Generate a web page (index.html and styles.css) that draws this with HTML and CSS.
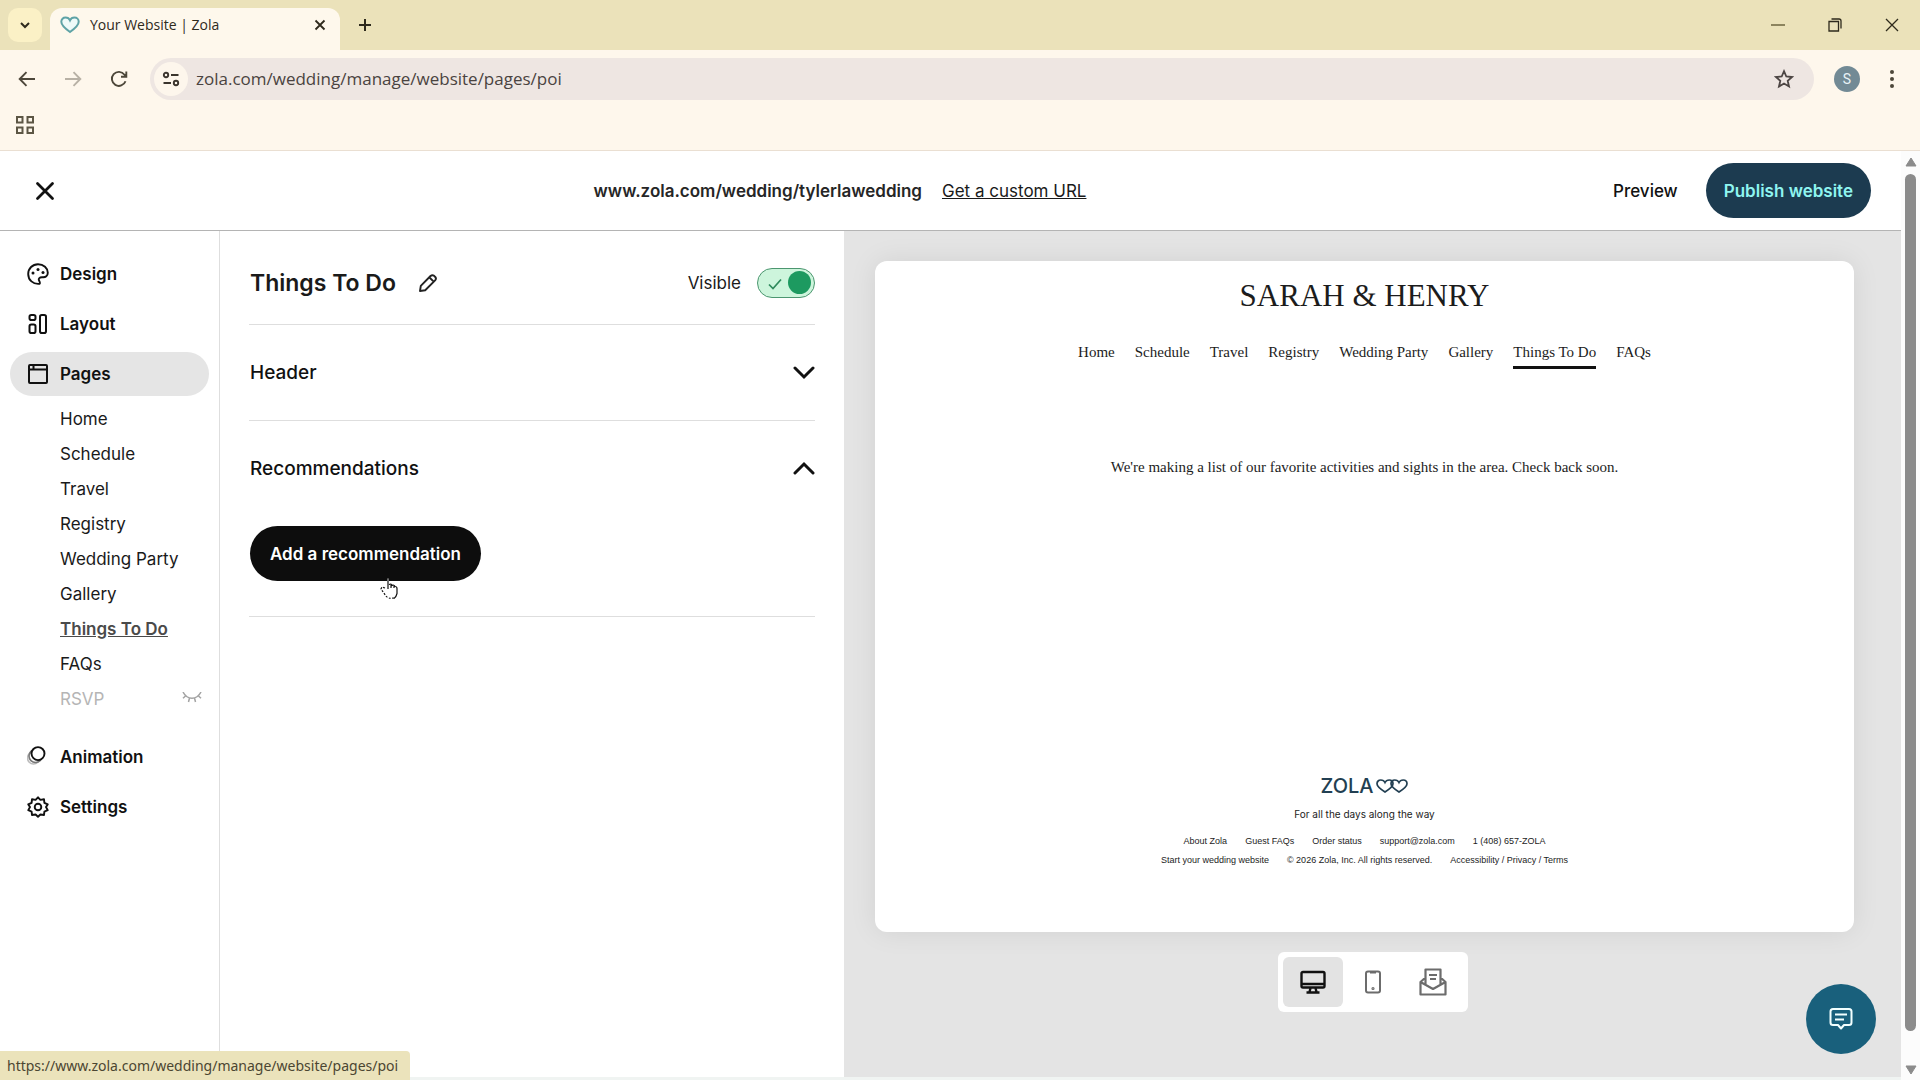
FILE: index.html
```html
<!DOCTYPE html>
<html lang="en">
<head>
<meta charset="utf-8">
<title>Your Website | Zola</title>
<link rel="stylesheet" href="styles.css">
</head>
<body class="window">

<div class="tabstrip">
  <button class="tab-search" aria-label="Search tabs"><svg width="12" height="12" viewBox="0 0 12 12"><path d="M2 4l4 4 4-4" fill="none" stroke="currentColor" stroke-width="2"/></svg></button>
  <div class="tab">
    <svg class="tab-heart" width="20" height="18" viewBox="0 0 20 18"><path d="M10 16C5 12.500 1.300 9.500 1.300 5.800 1.300 3.200 3.200 1.500 5.500 1.500 7.500 1.500 9.200 2.600 10 4.400c.8-1.800 2.500-2.900 4.500-2.900 2.300 0 4.200 1.700 4.200 4.300C18.700 9.500 15 12.500 10 16z" fill="#eefaf8" stroke="#5fa3a6" stroke-width="2"/></svg>
    <span class="tab-title">Your Website | Zola</span>
    <button class="bare" aria-label="Close tab"><svg width="12" height="12" viewBox="0 0 12 12"><path d="M1.500 1.500l9 9m0-9l-9 9" stroke="currentColor" stroke-width="1.800"/></svg></button>
  </div>
  <button class="bare new-tab" aria-label="New tab"><svg width="14" height="14" viewBox="0 0 14 14"><path d="M7 1v12M1 7h12" stroke="currentColor" stroke-width="2"/></svg></button>
  <div class="win-buttons">
    <button class="bare win" aria-label="Minimize"><svg width="14" height="14" viewBox="0 0 14 14"><path d="M0 7h14" stroke="#6d653f" stroke-width="1.500"/></svg></button>
    <button class="bare win" aria-label="Restore"><svg width="14" height="14" viewBox="0 0 14 14"><path d="M1 3.500h9.500V13H1zM3.500 1H11q2 0 2 2v7.500" fill="none" stroke="currentColor" stroke-width="1.300"/></svg></button>
    <button class="bare win" aria-label="Close"><svg width="14" height="14" viewBox="0 0 14 14"><path d="M1 1l12 12M13 1L1 13" stroke="currentColor" stroke-width="1.300"/></svg></button>
  </div>
</div>

<div class="toolbar">
  <button class="bare tool" aria-label="Back"><svg width="18" height="16" viewBox="0 0 18 16"><path d="M17 8H2M8.500 1.200L1.700 8l6.800 6.800" fill="none" stroke="#4d473a" stroke-width="1.900"/></svg></button>
  <button class="bare tool" aria-label="Forward"><svg width="18" height="16" viewBox="0 0 18 16"><path d="M1 8h15M9.500 1.200L16.300 8l-6.800 6.800" fill="none" stroke="#b8b1a5" stroke-width="1.900"/></svg></button>
  <button class="bare tool" aria-label="Reload"><svg width="18" height="18" viewBox="0 0 18 18"><path d="M15.500 11.200A7 7 0 1 1 14.500 4.700L16 6.300M16.300 1.500v5.300H11" fill="none" stroke="#4d473a" stroke-width="1.900"/></svg></button>
  <div class="omnibox">
    <button class="site-info" aria-label="View site information"><svg width="18" height="16" viewBox="0 0 18 16" fill="none" stroke="#3a342d" stroke-width="1.900"><circle cx="4" cy="4" r="2.200"/><path d="M9 4h7.500M1.500 12H9"/><circle cx="14" cy="12" r="2.200"/></svg></button>
    <input class="address" type="text" aria-label="Address" value="zola.com/wedding/manage/website/pages/poi">
    <button class="bare" aria-label="Bookmark this tab"><svg width="20" height="20" viewBox="0 0 20 20"><path d="M10 2.200l2.300 5.300 5.800.5-4.400 3.800 1.300 5.700-5-3-5 3 1.300-5.700L1.900 8l5.800-.5z" fill="none" stroke="#4d4644" stroke-width="1.800"/></svg></button>
  </div>
  <button class="avatar" aria-label="Profile">S</button>
  <button class="bare menu" aria-label="Menu"><svg width="6" height="20" viewBox="0 0 6 20" fill="#4d473a"><circle cx="3" cy="3" r="2"/><circle cx="3" cy="10" r="2"/><circle cx="3" cy="17" r="2"/></svg></button>
</div>

<div class="bookmarks">
  <button class="bare" aria-label="Apps"><svg width="18" height="18" viewBox="0 0 18 18" fill="none" stroke="#5c5644" stroke-width="2"><path d="M1 1h5.500v5.500H1zM11.500 1H17v5.500h-5.500zM1 11.500h5.500V17H1zM11.500 11.500H17V17h-5.500z"/></svg></button>
</div>

<div class="viewport">
  <div class="app">
    <header class="app-header">
      <button class="bare close" aria-label="Close editor"><svg width="20" height="20" viewBox="0 0 20 20"><path d="M2.500 2.500l15 15m0-15l-15 15" stroke="#111" stroke-width="2.800" stroke-linecap="round"/></svg></button>
      <div class="site-url">
        <span class="strong">www.zola.com/wedding/tylerlawedding</span>
        <a class="custom-url" href="#url">Get a custom URL</a>
      </div>
      <div class="actions">
        <a class="preview-link" href="#preview">Preview</a>
        <button class="pill publish">Publish website</button>
      </div>
    </header>

    <div class="workspace">
      <nav class="sidebar" aria-label="Editor">
        <a class="side-item" href="#design"><svg width="22" height="22" viewBox="0 0 22 22" fill="none" stroke="currentColor" stroke-width="1.900"><path d="M12.500 20.800C6 21.500 1.200 17 1.200 11 1.200 5.500 5.600 1.200 11 1.200c5.600 0 9.800 4 9.800 8.500 0 3.300-2.300 4.800-5 4.600-3.300-.3-4.800 1.200-3.600 3.500.7 1.300 1.200 2.200.3 3z"/><g fill="currentColor" stroke="none"><circle cx="6" cy="10" r="1.500"/><circle cx="11" cy="6.500" r="1.500"/><circle cx="16" cy="9.500" r="1.500"/></g></svg>Design</a>
        <a class="side-item" href="#layout"><svg width="22" height="22" viewBox="0 0 22 22" fill="none" stroke="currentColor" stroke-width="2"><rect x="2.500" y="2" width="6" height="5" rx="1.800"/><rect x="2.500" y="11.500" width="6" height="8.500" rx="1.800"/><rect x="13" y="2" width="6" height="18" rx="1.800"/></svg>Layout</a>
        <a class="side-item side-current" href="#pages"><svg width="22" height="22" viewBox="0 0 22 22" fill="none" stroke="currentColor" stroke-width="2"><rect x="2" y="2" width="18" height="18" rx="1"/><path d="M2 6.500h18M6.500 2v4"/></svg>Pages</a>
        <ul class="pages">
          <li><a href="#home">Home</a></li>
          <li><a href="#schedule">Schedule</a></li>
          <li><a href="#travel">Travel</a></li>
          <li><a href="#registry">Registry</a></li>
          <li><a href="#party">Wedding Party</a></li>
          <li><a href="#gallery">Gallery</a></li>
          <li><a class="page-current" href="#todo">Things To Do</a></li>
          <li><a href="#faqs">FAQs</a></li>
          <li><a class="page-hidden" href="#rsvp">RSVP</a><svg width="20" height="14" viewBox="0 0 20 14" fill="none" stroke="#a3a3a3" stroke-width="1.500"><path d="M1 0c2.200 4.300 5.300 6.300 9 6.300S16.800 4.300 19 0M3.500 4L1 6.300M7.500 6l-1 4M12.500 6l1 4M16.500 4L19 6.300"/></svg></li>
        </ul>
        <a class="side-item" href="#animation"><svg width="22" height="22" viewBox="0 0 22 22" fill="none"><circle cx="6.500" cy="12" r="6" stroke="#bbb" stroke-width="1.600"/><circle cx="8.500" cy="10" r="6.500" stroke="#777" stroke-width="1.600"/><circle cx="11" cy="7.600" r="6.500" fill="#fff" stroke="#111" stroke-width="1.900"/></svg>Animation</a>
        <a class="side-item" href="#settings"><svg width="22" height="22" viewBox="0 0 22 22" fill="none" stroke="currentColor" stroke-width="1.900" stroke-linejoin="round"><path d="M11 1.300l2.400 2.600 3.600-.6.400 3.500 3.300 1.600L19 11l1.700 3.100-3.300 1.500-.4 3.400-3.600-.5L11 20.700l-2.400-2.200-3.600.5-.4-3.400-3.300-1.500L3 11 1.300 8.400l3.300-1.600.4-3.500 3.600.6z"/><circle cx="11" cy="11" r="3.300"/></svg>Settings</a>
      </nav>

      <main class="panel">
        <div class="panel-title">
          <h1>Things To Do</h1>
          <button class="bare" aria-label="Rename page"><svg width="20" height="20" viewBox="0 0 20 20" fill="none" stroke="#222" stroke-width="1.900" stroke-linejoin="round"><path d="M2 18l.8-5.200L12.500 3q1.800-1.600 3.600-.2l1.200 1.200q1.400 1.600-.2 3.400L7.200 17.200zM11.500 4.500l4.200 4.200"/></svg></button>
          <label class="visible-label" for="visible">Visible</label>
          <span class="switch"><input id="visible" type="checkbox" checked><svg width="14" height="12" viewBox="0 0 14 12"><path d="M1 6.500l4 4L13 1.500" fill="none" stroke="#2f8a5c" stroke-width="1.700"/></svg></span>
        </div>
        <section class="section">
          <h2><button class="section-toggle" aria-expanded="false">Header<svg width="22" height="16" viewBox="0 0 22 16"><path d="M2 3l9 9 9-9" fill="none" stroke="#111" stroke-width="3" stroke-linecap="round"/></svg></button></h2>
        </section>
        <section class="section">
          <h2><button class="section-toggle" aria-expanded="true">Recommendations<svg width="22" height="16" viewBox="0 0 22 16"><path d="M2 12l9-9 9 9" fill="none" stroke="#111" stroke-width="3" stroke-linecap="round"/></svg></button></h2>
          <div class="section-body">
            <button class="pill add">Add a recommendation</button>
            <svg class="pointer" width="20" height="22" viewBox="0 0 20 22"><path d="M8 1v11l-3-3q-2-1-3 1l5 8q2 3 5 3h2q4-1 4-6V9q-1-2-3-1-1-2-3-1-1-1-2 0V1q-1-1-2 0z" fill="#fff"/><path d="M9 1v10M12 7v3M15 8v2M10 6.500q3-1 3 1 2-1 3 1 2 0 2 2v5q-1 4-3 5" fill="none" stroke="#111" stroke-width="1.200"/><path d="M6 10L3 9l-1 2 5 7q2 3 8 2" fill="none" stroke="#111" stroke-width="1.200" stroke-dasharray="2 1.500"/></svg>
          </div>
        </section>
      </main>

      <div class="stage">
        <article class="site">
          <h2 class="couple">SARAH &amp; HENRY</h2>
          <nav class="site-nav" aria-label="Wedding website">
            <a href="#s-home">Home</a><a href="#s-schedule">Schedule</a><a href="#s-travel">Travel</a><a href="#s-registry">Registry</a><a href="#s-party">Wedding Party</a><a href="#s-gallery">Gallery</a><a class="site-current" href="#s-todo">Things To Do</a><a href="#s-faqs">FAQs</a>
          </nav>
          <p class="empty">We're making a list of our favorite activities and sights in the area. Check back soon.</p>
          <footer class="site-footer">
            <div class="logo">ZOLA<svg width="32" height="14" viewBox="0 0 32 14" fill="none" stroke="#223f52" stroke-width="1.700"><path d="M9 13C5 10.500 1 8 1 4.800 1 2.500 2.700 1 4.800 1 6.800 1 8.300 2 9 3.500 9.700 2 11.200 1 13.200 1 15.300 1 17 2.500 17 4.800 17 8 13 10.500 9 13z"/><path d="M23 13c-4-2.500-8-5-8-8.200C15 2.500 16.700 1 18.800 1c2 0 3.500 1 4.200 2.500C23.700 2 25.200 1 27.200 1 29.300 1 31 2.500 31 4.800 31 8 27 10.500 23 13z"/></svg></div>
            <p class="tagline">For all the days along the way</p>
            <div class="foot-row"><a href="#about">About Zola</a><a href="#guest">Guest FAQs</a><a href="#order">Order status</a><a href="#mail">support@zola.com</a><a href="#tel">1 (408) 657-ZOLA</a></div>
            <div class="foot-row"><a href="#start">Start your wedding website</a><span>© 2026 Zola, Inc. All rights reserved.</span><span><a href="#access">Accessibility</a> / <a href="#privacy">Privacy</a> / <a href="#terms">Terms</a></span></div>
          </footer>
        </article>
        <div class="devices">
          <button class="device device-current" aria-label="Desktop"><svg width="26" height="24" viewBox="0 0 26 24" fill="none" stroke="currentColor" stroke-width="2.400"><rect x="1.500" y="2" width="23" height="15.500" rx="1.500"/><path d="M1.500 14h23M6.500 22.500h13M10.500 18l-1 4M15.500 18l1 4"/></svg></button>
          <button class="device" aria-label="Mobile"><svg width="16" height="24" viewBox="0 0 16 24" fill="none" stroke="currentColor" stroke-width="2"><rect x="1" y="1.500" width="14" height="21" rx="2"/><path d="M5 2.500h6"/><circle cx="8" cy="18.500" r=".6"/></svg></button>
          <button class="device" aria-label="Invitation email"><svg width="28" height="28" viewBox="0 0 28 28" fill="none" stroke="currentColor" stroke-width="2.200" stroke-linejoin="round"><path d="M6.500 16V1.500h15V16M6.500 9.500L1.500 14v12.500h25V14l-5-4.500M1.500 14L14 21l12.500-7M10 7h8M11 11h6"/></svg></button>
        </div>
      </div>
    </div>
  </div>
  <div class="scrollbar" aria-hidden="true">
    <svg width="12" height="10" viewBox="0 0 12 10"><path d="M6 1l5 8H1z" fill="#8b8b8b" stroke="#8b8b8b" stroke-linejoin="round"/></svg>
    <div class="thumb"></div>
    <svg width="12" height="10" viewBox="0 0 12 10"><path d="M6 9l5-8H1z" fill="#8b8b8b" stroke="#8b8b8b" stroke-linejoin="round"/></svg>
  </div>
</div>

<button class="chat" aria-label="Chat"><svg width="24" height="24" viewBox="0 0 24 24" fill="none" stroke="#f2ffff" stroke-width="2" stroke-linejoin="round"><path d="M4 2h16q2.500 0 2.500 2.500v11Q22.500 18 20 18h-5l-3 3.500L9 18H4q-2.500 0-2.500-2.500v-11Q1.500 2 4 2zM6 7.500h12M6 12.500h9"/></svg></button>
<div class="status">https://www.zola.com/wedding/manage/website/pages/poi</div>
</body>
</html>
```
FILE: styles.css
```css
* { box-sizing: border-box; }

body, h1, h2, p, ul { margin: 0; padding: 0; }

a { color: inherit; text-decoration: none; }

button { font: inherit; color: inherit; border: 0; padding: 0; cursor: pointer; }

svg { display: block; flex: none; }

.bare { display: flex; align-items: center; justify-content: center; background: none; }

/* Browser frame */
.window {
  min-height: 100vh;
  display: flex;
  flex-direction: column;
  background: #fff;
  color: #1a1a1a;
  font: 400 17px/24px Inter, "Liberation Sans", sans-serif;
}

.tabstrip {
  display: flex;
  align-items: center;
  height: 50px;
  padding-left: 8px;
  background: #ebe2ba;
  color: #2e2a1c;
  font: 14px/20px "Open Sans", "Noto Sans", sans-serif;
}
.tab-search {
  display: flex;
  align-items: center;
  justify-content: center;
  width: 34px;
  height: 34px;
  border-radius: 10px;
  background: #fbf1c6;
}
.tab {
  display: flex;
  align-items: center;
  align-self: flex-end;
  gap: 10px;
  width: 290px;
  height: 42px;
  margin-left: 8px;
  padding: 0 14px 8px 10px;
  border-radius: 12px 12px 0 0;
  background: #fef8ec;
}
.tab-title { flex: 1; }
.new-tab { width: 50px; height: 34px; }
.win-buttons { display: flex; margin-left: auto; }
.win { width: 57px; height: 34px; }

.toolbar {
  display: flex;
  align-items: center;
  height: 58px;
  padding: 0 16px 0 4px;
  background: #fef7ec;
}
.tool { width: 46px; height: 40px; }
.omnibox {
  display: flex;
  align-items: center;
  flex: 1;
  gap: 8px;
  height: 42px;
  margin-left: 8px;
  padding: 0 20px 0 4px;
  border-radius: 21px;
  background: #eee6e2;
}
.site-info {
  display: flex;
  align-items: center;
  justify-content: center;
  width: 34px;
  height: 34px;
  border-radius: 17px;
  background: #fdf6ec;
}
.address {
  flex: 1;
  border: 0;
  padding: 0;
  background: none;
  color: #4a4340;
  font: 17px/24px "Open Sans", "Noto Sans", sans-serif;
}
.avatar {
  width: 26px;
  height: 26px;
  margin-left: 20px;
  border-radius: 13px;
  background: #728a95;
  color: #e8f2f6;
  font: 14px/26px Roboto, sans-serif;
}
.menu { width: 24px; height: 34px; margin-left: 20px; }

.bookmarks {
  display: flex;
  align-items: center;
  height: 43px;
  padding: 0 16px 8px;
  border-bottom: 1px solid #eadfd2;
  background: #fef7ec;
}

/* Page area */
.viewport { flex: 1; display: flex; }
.app { flex: 1; display: flex; flex-direction: column; border-bottom: 3px solid #f0f4f2; }

.app-header {
  display: flex;
  align-items: center;
  justify-content: space-between;
  height: 80px;
  padding: 0 30px 0 23px;
  border-bottom: 1px solid #b4b4b4;
}
.close { width: 44px; height: 44px; }
.site-url { display: flex; gap: 20px; }
.strong { font-weight: 600; color: #262626; }
.custom-url { text-decoration: underline; }
.actions { display: flex; align-items: center; gap: 28px; }
.preview-link { font-weight: 500; color: #111; }
.pill { height: 55px; border-radius: 28px; font-weight: 600; }
.publish { padding: 0 18px; background: #1c3b50; color: #8ff5f0; }

.workspace { flex: 1; display: flex; }

.sidebar {
  display: flex;
  flex-direction: column;
  gap: 6px;
  width: 220px;
  padding: 21px 10px;
  border-right: 1px solid #dedede;
}
.side-item {
  display: flex;
  align-items: center;
  gap: 11px;
  height: 44px;
  padding-left: 17px;
  border-radius: 22px;
  color: #111;
  font-weight: 600;
}
.side-current { background: #e5e5e5; }
.pages { margin-bottom: 12px; list-style: none; }
.pages li {
  display: flex;
  align-items: center;
  justify-content: space-between;
  height: 35px;
  padding: 0 7px 2px 50px;
}
.page-current { color: #4a4a4a; font-weight: 600; text-decoration: underline; }
.page-hidden { color: #b5b5b5; }

.panel { width: 624px; padding: 0 29px; }
.panel-title {
  display: flex;
  align-items: center;
  height: 94px;
  padding: 10px 0 0 1px;
  border-bottom: 1px solid #dedede;
}
h1 { margin-right: 22px; font: 600 23px/32px Inter, sans-serif; }
.visible-label { margin: 0 16px 0 auto; }
.switch { position: relative; }
.switch input {
  display: flex;
  align-items: center;
  justify-content: flex-end;
  appearance: none;
  width: 58px;
  height: 30px;
  margin: 0;
  padding-right: 3px;
  border: 1px solid #4c9670;
  border-radius: 15px;
  background: #cdf5dc;
}
.switch input::before { content: ""; width: 23px; height: 23px; border-radius: 12px; background: #1d9a60; }
.switch svg { position: absolute; left: 11px; top: 10px; pointer-events: none; }

.section { border-bottom: 1px solid #dedede; }
.section-toggle {
  display: flex;
  align-items: center;
  justify-content: space-between;
  width: 100%;
  height: 95px;
  padding-left: 1px;
  background: none;
  font: 500 19px/28px Inter, sans-serif;
  color: #111;
}
.section-body { position: relative; padding: 10px 0 35px 1px; }
.add { padding: 0 20px; background: #0d0d0d; color: #fff; }
.pointer { position: absolute; left: 130px; top: 62px; }

/* Website preview */
.stage {
  flex: 1;
  display: flex;
  flex-direction: column;
  align-items: center;
  gap: 20px;
  padding: 30px 0 65px;
  background: #e4e4e4;
}
.site {
  flex: 1;
  align-self: stretch;
  display: flex;
  flex-direction: column;
  align-items: center;
  margin: 0 47px 0 31px;
  padding: 17px 20px 62px;
  border-radius: 12px;
  background: #fff;
  box-shadow: 0 0 28px rgba(0, 0, 0, 0.08);
  color: #1c1c1c;
  font: 15px/20px "Liberation Serif", serif;
}
.couple { font: 400 31px/36px "Liberation Serif", serif; }
.site-nav { display: flex; gap: 20px; margin-top: 28px; }
.site-nav a { padding-bottom: 4px; border-bottom: 3px solid transparent; }
.site-nav .site-current { border-color: #111; }
.empty { margin-top: 88px; }
.site-footer {
  display: flex;
  flex-direction: column;
  align-items: center;
  margin-top: auto;
  font: 9px/19px "Liberation Sans", sans-serif;
}
.logo {
  display: flex;
  align-items: center;
  gap: 3px;
  color: #223f52;
  font: 500 20px/20px Inter, sans-serif;
}
.tagline { margin: 8px 0; font: 10px/20px Inter, sans-serif; }
.foot-row { display: flex; gap: 18px; }

.devices { display: flex; padding: 5px; border-radius: 6px; background: #fff; }
.device {
  display: flex;
  align-items: center;
  justify-content: center;
  width: 60px;
  height: 50px;
  border-radius: 6px;
  background: none;
  color: #6c6c6c;
}
.device-current { background: #e3e3e3; color: #111; }

.scrollbar {
  display: flex;
  flex-direction: column;
  align-items: center;
  width: 19px;
  padding: 6px 0 5px;
  background: #fcfcfc;
}
.thumb { flex: 1; width: 11px; margin: 7px 0 34px; border-radius: 6px; background: #8b8b8b; }

/* Floating over the page */
.chat {
  position: fixed;
  right: 44px;
  bottom: 26px;
  display: flex;
  align-items: center;
  justify-content: center;
  width: 70px;
  height: 70px;
  border-radius: 35px;
  background: #19607c;
}
.status {
  position: fixed;
  left: 0;
  bottom: 0;
  padding: 3px 12px 2px 7px;
  border-radius: 0 4px 0 0;
  background: #ebe3bb;
  color: #4b4632;
  font: 14px/24px "Noto Sans", "Open Sans", sans-serif;
}
```
